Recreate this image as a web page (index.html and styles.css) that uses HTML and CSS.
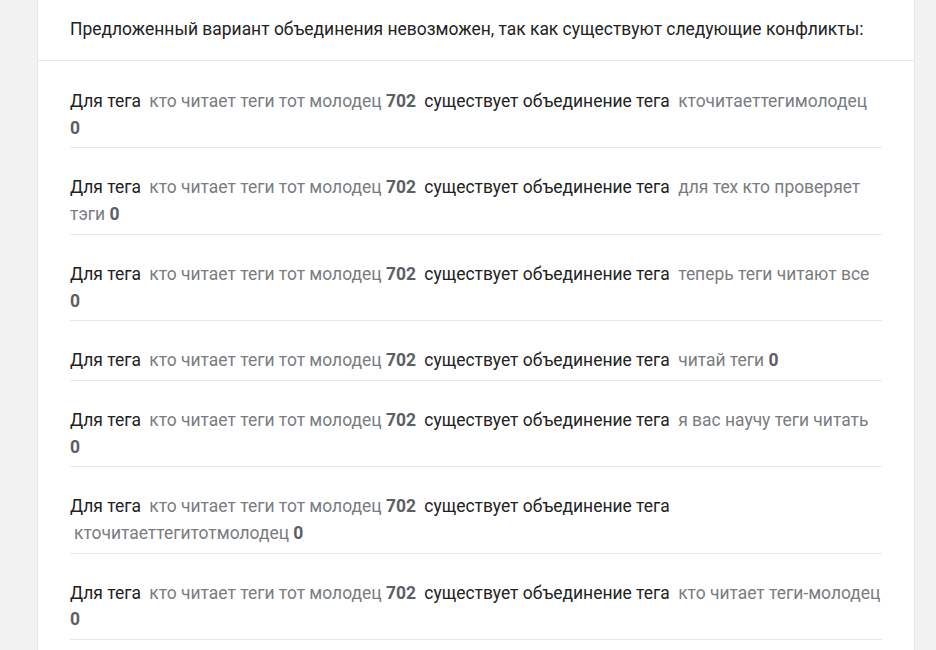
FILE: index.html
```html
<!DOCTYPE html>
<html lang="ru">
<head>
<meta charset="utf-8">
<link rel="stylesheet" href="styles.css">
</head>
<body>
<div class="card">
  <div class="card-header">Предложенный вариант объединения невозможен, так как существуют следующие конфликты:</div>
  <ul class="conflicts">
    <li class="conflict">Для тега <span class="tag">кто читает теги тот молодец <b>702</b></span> существует объединение тега <span class="tag">кточитаеттегимолодец <b>0</b></span></li>
    <li class="conflict">Для тега <span class="tag">кто читает теги тот молодец <b>702</b></span> существует объединение тега <span class="tag">для тех кто проверяет тэги <b>0</b></span></li>
    <li class="conflict">Для тега <span class="tag">кто читает теги тот молодец <b>702</b></span> существует объединение тега <span class="tag">теперь теги читают все <b>0</b></span></li>
    <li class="conflict">Для тега <span class="tag">кто читает теги тот молодец <b>702</b></span> существует объединение тега <span class="tag">читай теги <b>0</b></span></li>
    <li class="conflict">Для тега <span class="tag">кто читает теги тот молодец <b>702</b></span> существует объединение тега <span class="tag">я вас научу теги читать <b>0</b></span></li>
    <li class="conflict">Для тега <span class="tag">кто читает теги тот молодец <b>702</b></span> существует объединение тега <span class="tag">кточитаеттегитотмолодец <b>0</b></span></li>
    <li class="conflict">Для тега <span class="tag">кто читает теги тот молодец <b>702</b></span> существует объединение тега <span class="tag">кто читает теги&#8209;молодец <b>0</b></span></li>
  </ul>
</div>
</body>
</html>
```

FILE: styles.css
```css
html, body {
  margin: 0;
  padding: 0;
}
body {
  background: #f2f2f2;
  font-family: Roboto, "Liberation Sans", sans-serif;
  font-size: 17.45px;
  color: #222222;
}
.card {
  margin: 0 21px 0 37px;
  background: #ffffff;
  border-left: 1px solid #e7e7e7;
  border-right: 1px solid #e7e7e7;
  min-height: 650px;
}
.card-header {
  padding: 17px 32px 19px;
  line-height: 24px;
  border-bottom: 1px solid #e7e7e7;
}
.conflicts {
  list-style: none;
  margin: 0;
  padding: 1px 32px 0;
}
.conflict {
  padding: 26px 0 6px;
  line-height: 26.7px;
  border-bottom: 1px solid #e7e7e7;
}
.tag {
  color: #797c80;
  padding: 0 4px;
}
.tag b {
  font-weight: 700;
  color: #5c6065;
}
```
